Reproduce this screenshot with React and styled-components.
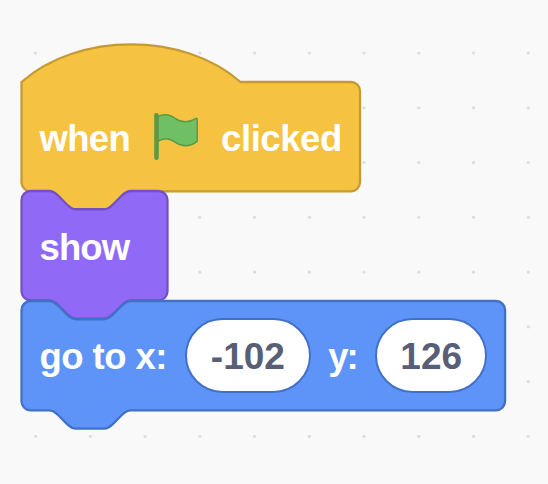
import React from "react";
import styled, { createGlobalStyle } from "styled-components";

const UNIT = 2.281;
const STEP = 24 * UNIT;

const Global = createGlobalStyle`
  html, body { margin: 0; background: #f9f9f9; }
`;

const Workspace = styled.main`
  position: relative;
  box-sizing: border-box;
  width: 548px;
  height: 484px;
  overflow: hidden;
  padding: 82px 0 0 21px;
  background: #f9f9f9;
`;

const GridDots = styled.svg`
  position: absolute;
  inset: 0;
  width: 100%;
  height: 100%;
`;

const Stack = styled.div`
  display: flex;
  flex-direction: column;
  align-items: flex-start;
`;

const Block = styled.section`
  position: relative;
  box-sizing: border-box;
  display: flex;
  align-items: center;
  width: ${(p) => p.$units * UNIT}px;
  height: ${48 * UNIT}px;
  padding-left: 18.5px;
`;

const Shape = styled.svg`
  position: absolute;
  left: 0;
  top: 0;
  width: 100%;
  height: 100%;
  overflow: visible;
`;

const Label = styled.span`
  position: relative;
  flex: none;
  width: ${(p) => p.$width}px;
  padding-top: ${(p) => p.$drop ?? 4}px;
  font: 700 36.5px/40px "Liberation Sans", Arial, sans-serif;
  letter-spacing: ${(p) => p.$tracking || 0}px;
  white-space: pre;
  color: #fff;
`;

const FlagIcon = styled.svg`
  position: relative;
  flex: none;
  width: 60px;
  height: 60px;
  margin: 0 16px 4px -3.4px;
`;

const NumberField = styled.div`
  position: relative;
  box-sizing: border-box;
  flex: none;
  display: flex;
  align-items: center;
  justify-content: center;
  width: ${(p) => p.$width}px;
  height: 75px;
  border: 2.3px solid #4170c7;
  border-radius: 37.5px;
  background: #fff;
  font: 700 37px/40px "Liberation Sans", Arial, sans-serif;
  color: #575e75;
  margin-right: ${(p) => p.$gap || 0}px;
`;

const Digits = styled.span`
  padding-top: 2px;
`;

const notchTop =
  "M0 4A4 4 0 0 1 4 0H12c2 0 3 1 4 2l4 4c1 1 2 2 4 2h12c2 0 3-1 4-2l4-4c1-1 2-2 4-2";
const hatTop = "M0 0c25-22 71-22 96 0";
const bottom =
  "a4 4 0 0 1 4 4v40a4 4 0 0 1-4 4H48c-2 0-3 1-4 2l-4 4c-1 1-2 2-4 2h-12c-2 0-3-1-4-2l-4-4c-1-1-2-2-4-2H4a4 4 0 0 1-4-4z";

function BlockShape({ units, fill, stroke, hat }) {
  return (
    <Shape viewBox={`0 0 ${units} 48`} preserveAspectRatio="none">
      <path
        transform="translate(0.23 0)"
        d={`${hat ? hatTop : notchTop}H${units - 4}${bottom}`}
        fill={fill}
        stroke={stroke}
        strokeWidth="1"
      />
    </Shape>
  );
}

function Flag() {
  return (
    <FlagIcon viewBox="0 0 60 60">
      <path
        fill="#6fbf65"
        stroke="#5c9a45"
        strokeWidth="1.5"
        strokeLinejoin="round"
        d="M12 11.8C18.5 8.8 25.5 9.8 30.5 13.6C36.5 17.8 44.5 17.6 50.6 13.6C51.4 13.1 52.2 13.4 52.2 14.3V36.4C45.5 42 36.5 41.8 30.5 37.4C24.5 32.6 17.5 33 12 36.8Z"
      />
      <path
        stroke="#5c9a45"
        strokeWidth="4.6"
        strokeLinecap="round"
        d="M11.5 10.2V52.8"
      />
    </FlagIcon>
  );
}

function Dots() {
  const dots = [];
  for (let row = 0; row < 9; row += 1) {
    for (let col = 0; col < 10; col += 1) {
      dots.push(
        <circle
          key={`${row}-${col}`}
          cx={35.6 + col * STEP}
          cy={53.1 + (row - 1) * STEP}
          r="1.6"
        />
      );
    }
  }
  return <GridDots fill="#dddddd">{dots}</GridDots>;
}

export default function App() {
  return (
    <>
      <Global />
      <Workspace>
        <Dots />
        <Stack>
          <Block $units={148.4}>
            <BlockShape hat units={148.4} fill="#f5c242" stroke="#c49a33" />
            <Label $width={109} $tracking={-0.7}>when</Label>
            <Flag />
            <Label $width={122} $tracking={-0.45}>clicked</Label>
          </Block>
          <Block $units={64}>
            <BlockShape units={64} fill="#9169f7" stroke="#7351c4" />
            <Label $width={100} $tracking={-0.9}>show</Label>
          </Block>
          <Block $units={212}>
            <BlockShape units={212} fill="#5e94f8" stroke="#4170c7" />
            <Label $width={145} $tracking={-0.55} $drop={2}>go to x:</Label>
            <NumberField $width={126.8} $gap={17}>
              <Digits>-102</Digits>
            </NumberField>
            <Label $width={46.7} $tracking={-2} $drop={2}>y:</Label>
            <NumberField $width={112.5}>
              <Digits>126</Digits>
            </NumberField>
          </Block>
        </Stack>
      </Workspace>
    </>
  );
}
